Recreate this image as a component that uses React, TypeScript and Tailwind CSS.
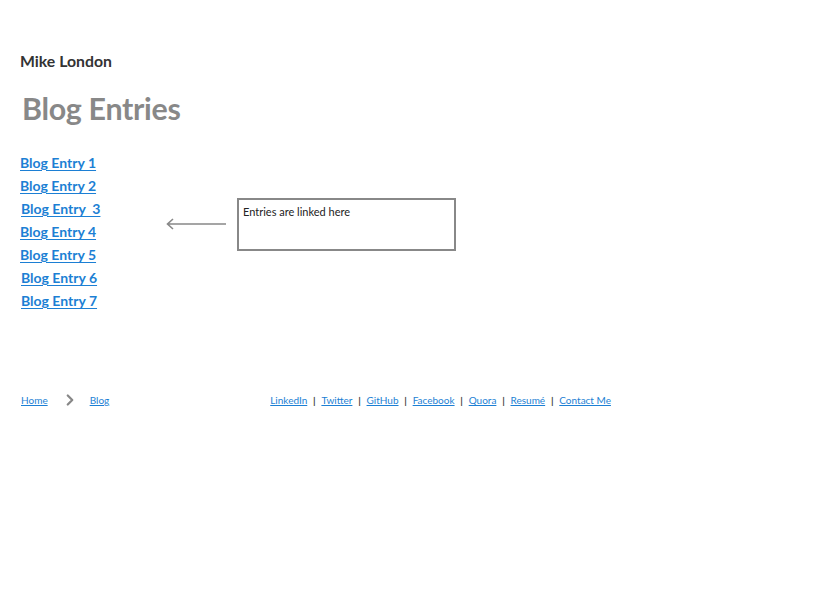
import { ChevronRight } from 'lucide-react'

const ENTRIES = ['Blog Entry 1', 'Blog Entry 2', 'Blog Entry  3', 'Blog Entry 4', 'Blog Entry 5', 'Blog Entry 6', 'Blog Entry 7']
const OFFSETS = ['ml-0', 'ml-0', 'ml-px', 'ml-0', 'ml-0', 'ml-px', 'ml-px']

const SOCIAL = ['LinkedIn', 'Twitter', 'GitHub', 'Facebook', 'Quora', 'Resumé', 'Contact Me']

export default function App() {
  return (
    <div className="min-h-[600px] w-[820px] bg-white font-['Lato','Open_Sans',sans-serif]">
      <div className="px-5 pt-[52px]">
        {/* Header */}
        <h2 className="text-[15.8px] font-bold text-[#333] leading-[18px]">Mike London</h2>
        <h1 className="mt-[20px] ml-[2px] text-[30.4px] font-bold text-[#888] leading-[36px] tracking-[-0.3px]">Blog Entries</h1>

        {/* Entries + note */}
        <div className="mt-[24px] flex items-start">
          <ul className="flex flex-col w-[146px]">
            {ENTRIES.map((e, i) => (
              <li key={i} className={`h-[23px] leading-[23px] ${OFFSETS[i]}`}>
                <a href="#" className="text-[14px] font-bold text-[#1c7fd4] underline underline-offset-2 whitespace-pre">
                  {e}
                </a>
              </li>
            ))}
          </ul>
          <svg width="62" height="12" viewBox="0 0 62 12" className="mt-[68px]">
            <path d="M1 6 H60 M7 1 L1.5 6 L7 11" fill="none" stroke="#888" strokeWidth="1.6" />
          </svg>
          <div className="ml-[9px] mt-[48px] w-[219px] h-[53px] border-2 border-[#888] px-[4px] pt-[5px] text-[11px] leading-[14px] text-[#222]">
            Entries are linked here
          </div>
        </div>

        {/* Footer */}
        <div className="mt-[80px] flex items-center text-[10px] leading-[14px]">
          <a href="#" className="ml-px text-[#1c7fd4] underline">Home</a>
          <ChevronRight className="w-[18px] h-[18px] ml-[13px] text-[#888]" strokeWidth={3} />
          <a href="#" className="ml-[11px] text-[#1c7fd4] underline">Blog</a>
          <div className="ml-[161px] flex items-center">
            {SOCIAL.map((s, i) => (
              <span key={s} className="flex items-center">
                {i > 0 && <span className="mx-[5.75px] text-[#444] font-bold">|</span>}
                <a href="#" className="text-[#1c7fd4] underline">{s}</a>
              </span>
            ))}
          </div>
        </div>
      </div>
    </div>
  )
}
